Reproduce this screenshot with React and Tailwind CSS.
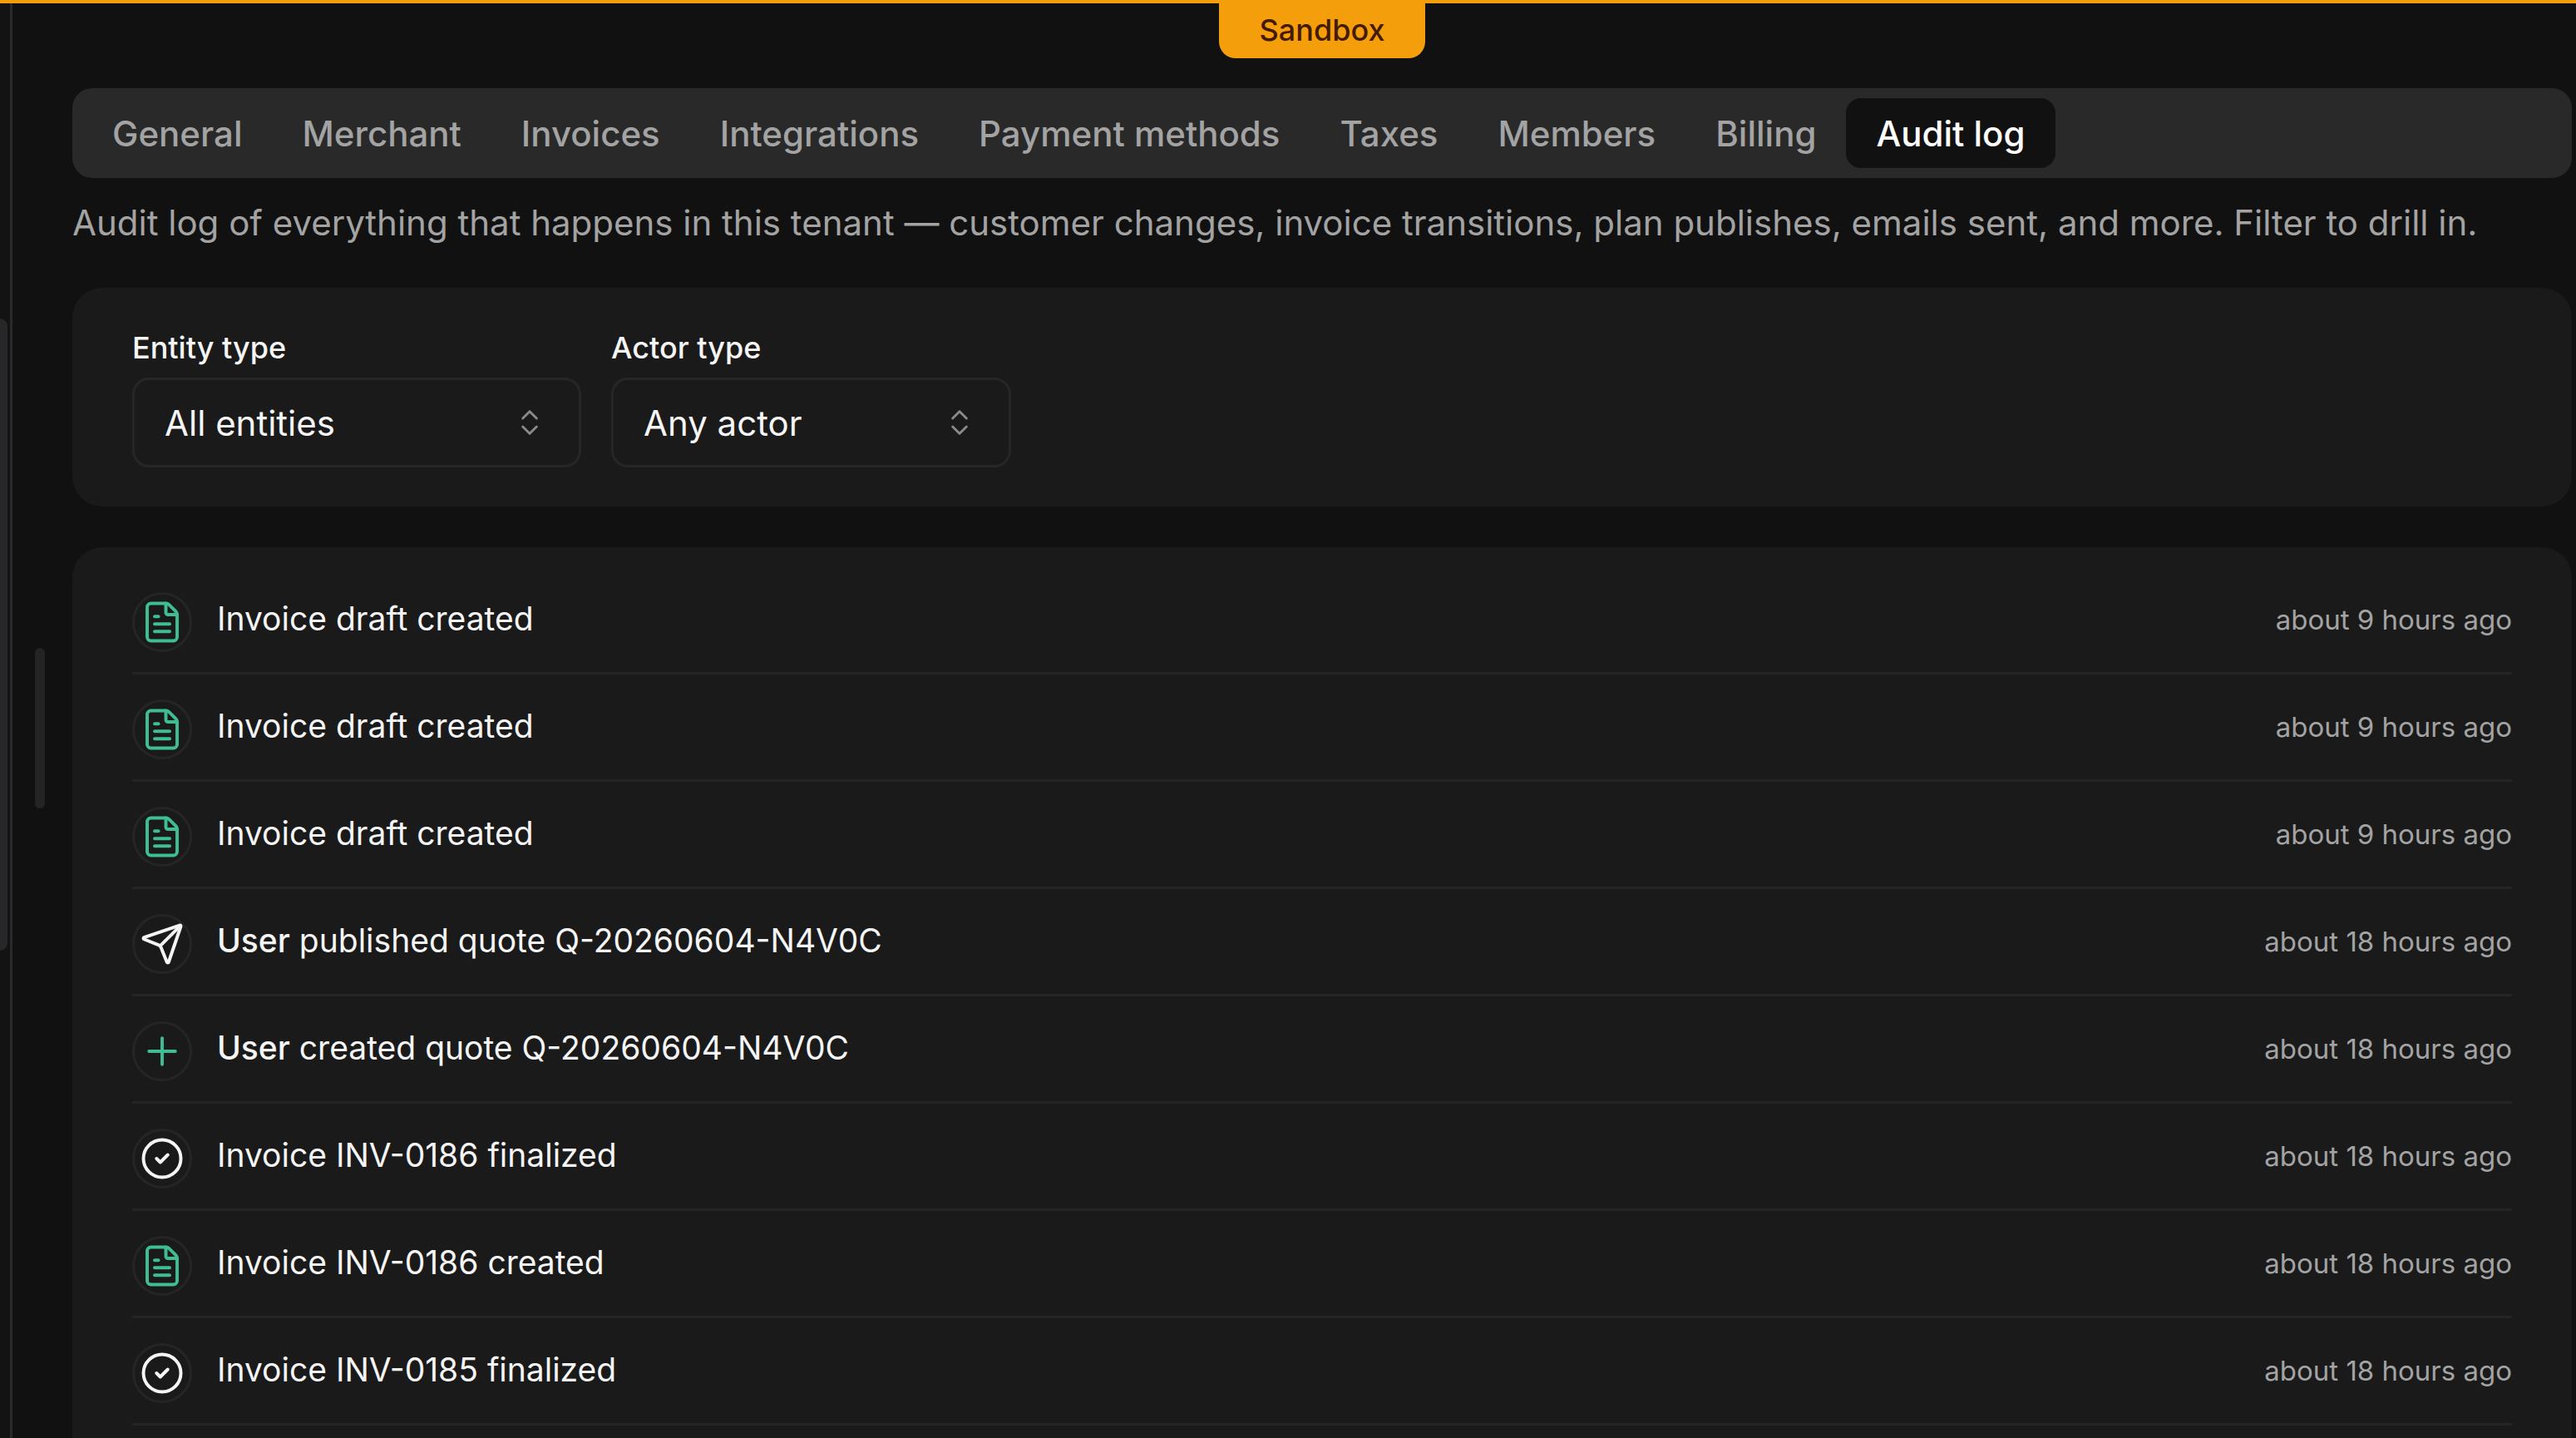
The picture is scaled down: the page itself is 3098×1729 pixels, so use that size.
import React from 'react';
import { ChevronsUpDown, CircleCheck, FileText, Plus, Send } from 'lucide-react';

const tabs = ['General', 'Merchant', 'Invoices', 'Integrations', 'Payment methods', 'Taxes', 'Members', 'Billing', 'Audit log'];

const rows = [
  { icon: 'file', text: 'Invoice draft created', time: 'about 9 hours ago' },
  { icon: 'file', text: 'Invoice draft created', time: 'about 9 hours ago' },
  { icon: 'file', text: 'Invoice draft created', time: 'about 9 hours ago' },
  { icon: 'send', actor: 'User', text: ' published quote Q-20260604-N4V0C', time: 'about 18 hours ago' },
  { icon: 'plus', actor: 'User', text: ' created quote Q-20260604-N4V0C', time: 'about 18 hours ago' },
  { icon: 'check', text: 'Invoice INV-0186 finalized', time: 'about 18 hours ago' },
  { icon: 'file', text: 'Invoice INV-0186 created', time: 'about 18 hours ago' },
  { icon: 'check', text: 'Invoice INV-0185 finalized', time: 'about 18 hours ago' },
];

function RowIcon({ icon }) {
  if (icon === 'file') return <FileText size={54} strokeWidth={1.75} className="text-[#3fbd93]" />;
  if (icon === 'plus') return <Plus size={54} strokeWidth={1.75} className="text-[#3fbd93]" />;
  if (icon === 'send') return <Send size={54} strokeWidth={1.75} className="text-[#f5f5f5]" />;
  return <CircleCheck size={54} strokeWidth={1.75} className="text-[#f5f5f5]" />;
}

function Select({ label, value, width }) {
  return (
    <div className="flex flex-col gap-[14px]">
      <label className="text-[36px] leading-[44px] font-medium text-[#f5f5f5]">{label}</label>
      <div className={`flex h-[108px] items-center justify-between rounded-[20px] border-[3px] border-[#262626] pl-[36px] pr-[39px] text-[42px] text-[#f5f5f5] ${width}`}>
        <span>{value}</span>
        <ChevronsUpDown size={40} strokeWidth={1.75} className="text-[#8a8a8a]" />
      </div>
    </div>
  );
}

export default function App() {
  return (
    <div className="relative flex h-[1729px] w-[3098px] overflow-hidden border-t-4 border-[#f59e0b] bg-[#111111] font-['Inter',sans-serif]">
      {/* collapsed sidebar sliver */}
      <div className="flex w-[15px] shrink-0 items-start border-r-[3px] border-[#2a2a2a] bg-[#131313] pt-[379px]">
        <div className="h-[760px] w-[9px] rounded-r-[12px] bg-[#27272a]" />
      </div>

      {/* sandbox badge */}
      <div className="absolute left-[1466px] top-0 flex h-[66px] w-[248px] items-center justify-center rounded-b-[20px] bg-[#f59e0b] pb-[2px] text-[36px] font-medium text-[#451a03]">
        Sandbox
      </div>

      {/* scroll thumb */}
      <div className="absolute left-[42px] top-[775px] h-[193px] w-[12px] rounded-full bg-[#242424]" />

      <main className="flex min-w-0 flex-1 flex-col pl-[72px] pr-[5px] pt-[102px]">
        <div className="flex h-[108px] shrink-0 items-center rounded-[24px] bg-[#292929] px-[12px]">
          {tabs.map((tab) => (
            <div
              key={tab}
              className={
                tab === 'Audit log'
                  ? 'flex h-[84px] items-center rounded-[18px] bg-[#111111] px-[36px] text-[42px] font-medium text-white'
                  : 'flex h-[84px] items-center px-[36px] text-[42px] font-medium text-[#a3a3a3]'
              }
            >
              {tab}
            </div>
          ))}
        </div>

        <p className="mt-[26px] shrink-0 whitespace-nowrap text-[42px] leading-[56px] text-[#a3a3a3]">
          Audit log of everything that happens in this tenant — customer changes, invoice transitions, plan publishes, emails sent, and more. Filter to drill in.
        </p>

        <div className="mt-[50px] flex h-[263px] shrink-0 gap-[36px] rounded-[36px] bg-[#1a1a1a] px-[72px] pt-[50px]">
          <Select label="Entity type" value="All entities" width="w-[540px]" />
          <Select label="Actor type" value="Any actor" width="w-[481px]" />
        </div>

        <div className="mt-[49px] shrink-0 rounded-[36px] bg-[#1a1a1a] px-[72px] pb-[60px] pt-[24px]">
          {rows.map((row, i) => (
            <div key={i} className="flex h-[129px] items-start border-b-[3px] border-[#252528] pt-[30px]">
              <div className="flex h-[72px] w-[72px] shrink-0 items-center justify-center rounded-full border-[3px] border-[#252525]">
                <RowIcon icon={row.icon} />
              </div>
              <div className="ml-[30px] mt-[8px] flex-1 text-[39px] leading-[48px] text-[#f5f5f5]">
                {row.actor && <span className="font-medium">{row.actor}</span>}
                {row.text}
              </div>
              <div className="mt-[11px] text-[33px] leading-[44px] text-[#a3a3a3]">{row.time}</div>
            </div>
          ))}
        </div>
      </main>
    </div>
  );
}
